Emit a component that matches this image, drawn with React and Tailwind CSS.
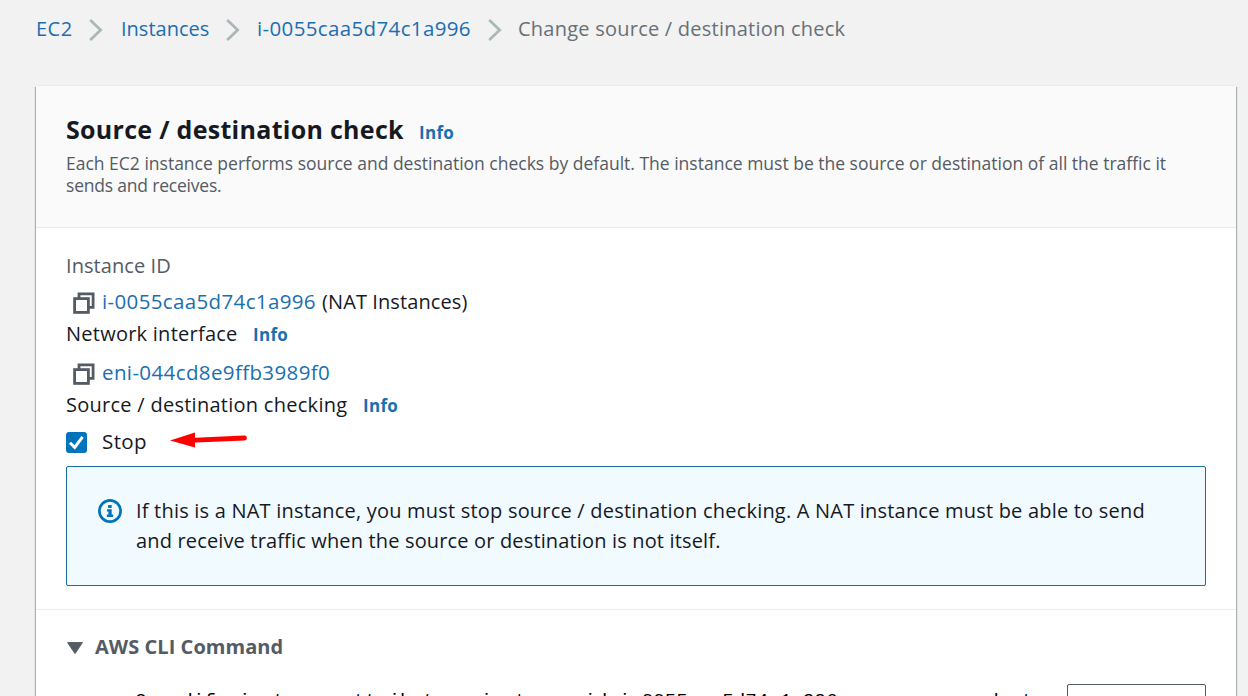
function Chevron({ className }) {
  return (
    <svg className={`h-[24px] w-[16px] shrink-0 ${className}`} viewBox="0 0 16 24" fill="none" stroke="#aab7b8" strokeWidth="2.7">
      <path d="M1.2 2 L11.7 12 L1.2 22" />
    </svg>
  );
}

function CopyIcon() {
  return (
    <svg className="ml-[7px] mt-[1px] h-[22px] w-[22px] shrink-0" viewBox="0 0 22 22" fill="none" stroke="#545b64" strokeWidth="2.8">
      <path d="M6 6 V1.9 H20.1 V15.4 H15.5" />
      <rect x="1.6" y="6.6" width="13.8" height="13.8" />
    </svg>
  );
}

function InfoLink() {
  return <a className="text-[17px] font-bold tracking-[0.3px] text-[#1a6fb0]">Info</a>;
}

function Breadcrumbs() {
  return (
    <nav className="flex h-[30px] items-center pl-[34px] text-[#1a6fb0]">
      <a className="w-[53px] tracking-[0.5px]">EC2</a>
      <Chevron className="mt-[1px]" />
      <a className="ml-[16px] w-[105px]">Instances</a>
      <Chevron className="mt-[1px]" />
      <a className="ml-[15px] mt-[-2px] w-[231px] text-[20.5px] tracking-[0.36px]">i-0055caa5d74c1a996</a>
      <Chevron className="mt-[1px]" />
      <span className="ml-[14px] tracking-[0.236px] text-[#687078]">Change source / destination check</span>
    </nav>
  );
}

function Header() {
  return (
    <header className="h-[142px] border-b border-[#e6e9e9] bg-[#fafafa] pl-[30px] pt-[27px]">
      <div className="flex h-[32px] items-baseline leading-[32px]">
        <h1 className="w-[353px] text-[25px] font-bold tracking-[0.29px]">Source / destination check</h1>
        <InfoLink />
      </div>
      <p className="mt-[7px] text-[17.5px] leading-[22px] text-[#545b64]">
        <span className="block">
          Each EC2 instance performs source and destination checks by default. The instance must be the source or destination of all the traffic it
        </span>
        <span className="block tracking-[-0.2px]">sends and receives.</span>
      </p>
    </header>
  );
}

function Alert() {
  return (
    <div className="mt-[9px] flex h-[120px] rounded-[2px] border border-[#1a6f9c] bg-[#f1faff] pl-[31px] pt-[29px]">
      <svg className="mt-[3px] h-[24px] w-[24px] shrink-0" viewBox="0 0 24 24" fill="none">
        <circle cx="12" cy="12" r="10.6" stroke="#0073bb" strokeWidth="2.7" />
        <path d="M10.1 6 H13.7 V9 H10.1 Z M9 10.3 H13.7 V15.6 H15.2 V18 H8.9 V15.6 H10.4 V12.6 H9 Z" fill="#0073bb" />
      </svg>
      <p className="ml-[14px]">
        <span className="block tracking-[0.205px]">
          If this is a NAT instance, you must stop source / destination checking. A NAT instance must be able to send
        </span>
        <span className="block tracking-[0.155px]">and receive traffic when the source or destination is not itself.</span>
      </p>
    </div>
  );
}

function RedArrow() {
  return (
    <svg className="ml-[24px] mt-[-4px] h-[18px] w-[80px]" viewBox="0 0 80 18">
      <path d="M20 9.3 L74.5 7" stroke="#ff0000" strokeWidth="4.8" strokeLinecap="round" />
      <path d="M0 9.4 L25 1.6 V16.4 Z" fill="#ff0000" />
    </svg>
  );
}

export default function App() {
  return (
    <div className="h-[696px] overflow-hidden bg-[#f2f2f2] pl-[2px] pt-[14px] font-['Open_Sans',sans-serif] text-[20px] leading-[30px] text-[#16191f]">
      <Breadcrumbs />
      <main className="ml-[34px] mt-[42px] h-[640px] w-[1200px] bg-white shadow-[0_-1px_0_0_#ececec,1px_1px_1px_0_rgba(0,28,36,0.3),-1px_1px_1px_0_rgba(0,28,36,0.3)]">
        <Header />
        <section className="flex h-[382px] flex-col border-b border-[#eaeded] px-[30px] pt-[23px]">
          <div className="h-[30px] tracking-[0.08px] text-[#545b64]">Instance ID</div>
          <div className="mt-[6px] flex h-[30px] items-center">
            <CopyIcon />
            <a className="ml-[7px] mt-[-2px] w-[220px] text-[20.5px] tracking-[0.36px] text-[#1a6fb0]">i-0055caa5d74c1a996</a>
            <span className="tracking-[0.1px]">(NAT Instances)</span>
          </div>
          <div className="mt-[2px] flex h-[30px] items-baseline">
            <span className="w-[187px] tracking-[0.25px]">Network interface</span>
            <InfoLink />
          </div>
          <div className="mt-[9px] flex h-[30px] items-center">
            <CopyIcon />
            <a className="ml-[7px] mt-[-2px] text-[20.5px] tracking-[0.38px] text-[#1a6fb0]">eni-044cd8e9ffb3989f0</a>
          </div>
          <div className="mt-[2px] flex h-[30px] items-baseline">
            <span className="w-[297px] tracking-[0.27px]">Source / destination checking</span>
            <InfoLink />
          </div>
          <div className="mt-[7px] flex h-[30px] items-center">
            <span className="flex h-[21px] w-[21px] items-center justify-center rounded-[3px] bg-[#0073bb]">
              <svg className="h-[21px] w-[21px]" viewBox="0 0 21 21" fill="none" stroke="#ffffff" strokeWidth="3">
                <path d="M4 10.8 L8.7 15.4 L16.6 4.8" />
              </svg>
            </span>
            <span className="ml-[15px] mt-[-2px] w-[44px] whitespace-nowrap text-[20.5px] tracking-[0.4px]">Stop</span>
            <RedArrow />
          </div>
          <Alert />
        </section>
        <section className="px-[30px] pt-[22px]">
          <div className="flex h-[30px] items-center text-[#545b64]">
            <svg className="ml-[1px] mt-[2px] h-[12px] w-[16px]" viewBox="0 0 16 12">
              <path d="M0.6 0.6 H15.4 L8 11.6 Z" fill="#545b64" stroke="#545b64" strokeLinejoin="round" />
            </svg>
            <span className="ml-[12px] font-bold tracking-[0.05px]">AWS CLI Command</span>
          </div>
          <div className="mt-[22px] flex items-start justify-between">
            <code className="mt-[2px] whitespace-pre font-['Liberation_Mono',monospace] text-[19.2px] leading-[30px] text-black">
              {'aws ec2 modify-instance-attribute --instance-id=i-0055caa5d74c1a996 --no-source-dest'}
            </code>
            <button className="h-[36px] w-[139px] shrink-0 rounded-[2px] border border-[#545b64] bg-white" aria-label="Copy" />
          </div>
        </section>
      </main>
    </div>
  );
}
